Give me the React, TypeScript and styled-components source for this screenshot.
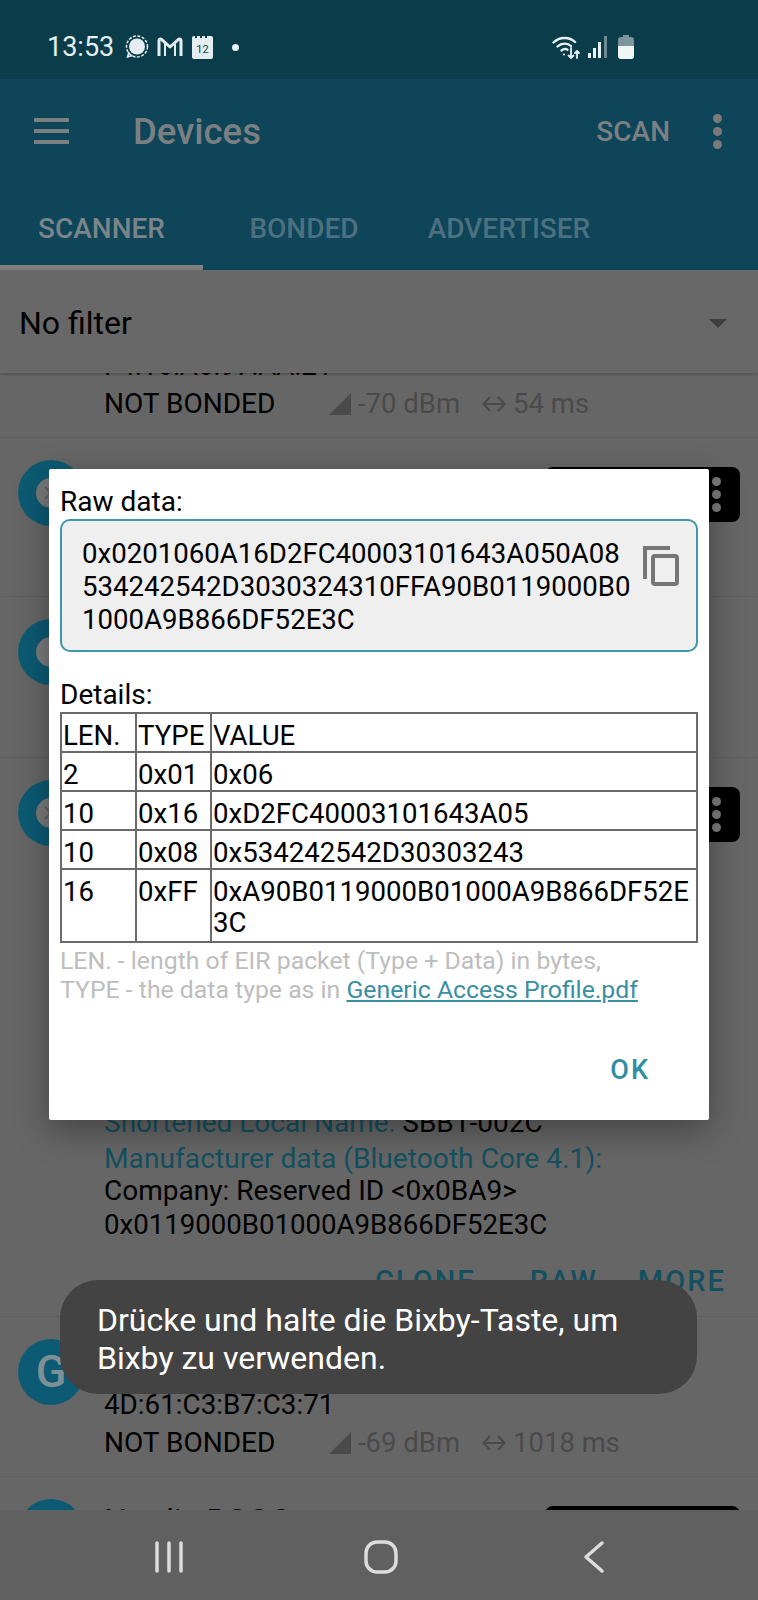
import React from 'react';
import styled, { createGlobalStyle } from 'styled-components';

const GlobalStyle = createGlobalStyle`
  html, body { margin: 0; padding: 0; background: #666; }
  * { box-sizing: border-box; }
  body { font-family: Roboto, "Liberation Sans", sans-serif; }
`;

const Screen = styled.div`
  position: relative;
  width: 758px;
  height: 1600px;
  display: flex;
  flex-direction: column;
  overflow: hidden;
  background: #666;
`;

const StatusBar = styled.div`
  height: 79px;
  flex: none;
  display: flex;
  align-items: center;
  padding: 15px 0 0 47px;
  background: #0b3c49;
  color: #e2f0f2;
`;

const Time = styled.span`
  font-size: 27px;
  line-height: 32px;
  width: 78px;
`;

const CalendarIcon = styled.span`
  position: relative;
  width: 21px;
  height: 23px;
  margin-left: 9px;
  padding-top: 6px;
  border-radius: 2px;
  background: #e4eef0;
  color: #17414d;
  font-size: 11px;
  line-height: 15px;
  text-align: center;

  &::before {
    content: '';
    position: absolute;
    top: 0;
    left: 3px;
    right: 3px;
    height: 2px;
    background: repeating-linear-gradient(90deg, #0b3c49 0 2px, transparent 2px 5px);
  }
`;

const StatusDot = styled.span`
  width: 7px;
  height: 7px;
  margin-left: 19px;
  border-radius: 50%;
  background: #e8f2f4;
`;

const StatusRight = styled.div`
  margin-left: 313px;
  display: flex;
  align-items: center;
  gap: 7px;
`;

const AppBar = styled.div`
  height: 191px;
  flex: none;
  background: #0e4559;
`;

const TopRow = styled.div`
  height: 104px;
  display: flex;
  align-items: center;
  padding-right: 36px;
  color: #7a7f82;
`;

const MenuIcon = styled.svg`
  width: 35px;
  height: 26px;
  margin-left: 34px;
`;

const Title = styled.span`
  margin-left: 64px;
  font-size: 36.5px;
  font-weight: 500;
  flex: 1;
`;

const ScanAction = styled.span`
  font-size: 28px;
  font-weight: 500;
  margin-right: 43px;
`;

const Dots = styled.div`
  display: flex;
  flex-direction: column;
  gap: 4px;
  width: 9px;
`;

const Dot = styled.span`
  width: 9px;
  height: 9px;
  border-radius: 50%;
  background: #7a7a7a;
`;

const Tabs = styled.div`
  height: 87px;
  display: flex;
`;

const Tab = styled.div<{ $active?: boolean; $width: number }>`
  width: ${(p) => p.$width}px;
  height: 87px;
  padding-top: 28px;
  text-align: center;
  font-size: 28px;
  line-height: 36px;
  font-weight: 500;
  color: ${(p) => (p.$active ? '#7a8489' : '#4c7080')};
  border-bottom: 5px solid ${(p) => (p.$active ? '#7f7f7f' : 'transparent')};
`;

const FilterRow = styled.div`
  position: relative;
  z-index: 1;
  height: 103px;
  flex: none;
  display: flex;
  align-items: center;
  justify-content: space-between;
  padding: 3px 31px 0 19px;
  background: #686868;
  box-shadow: 0 1px 3px rgba(0, 0, 0, 0.25);
  font-size: 32px;
  color: #000;
`;

const Caret = styled.span`
  width: 0;
  height: 0;
  border-left: 9px solid transparent;
  border-right: 9px solid transparent;
  border-top: 9px solid #3f3f3f;
`;

const DeviceList = styled.div`
  flex: 1;
  min-height: 0;
  overflow: hidden;
`;

const Device = styled.div<{ $height: number; $offset?: number }>`
  height: ${(p) => p.$height}px;
  margin-top: ${(p) => p.$offset ?? 0}px;
  flex: none;
  display: flex;
  align-items: flex-start;
  padding: 22px 18px 0;
  border-bottom: 1px solid #5e5e5e;
`;

const Avatar = styled.div`
  width: 66px;
  height: 66px;
  flex: none;
  display: flex;
  align-items: center;
  justify-content: center;
  border-radius: 50%;
  background: #0c5a73;
  color: #7f8f96;
  font-size: 45px;
  font-weight: 500;
  line-height: 66px;
`;

const AvatarDisc = styled.div`
  width: 30px;
  height: 30px;
  display: flex;
  align-items: center;
  justify-content: center;
  border-radius: 50%;
  background: #7a7a7a;
`;

const DeviceBody = styled.div<{ $top?: number }>`
  flex: 1;
  min-width: 0;
  margin-left: 20px;
  padding-top: ${(p) => p.$top ?? 0}px;
`;

const DeviceName = styled.div`
  height: 47px;
  padding-top: 3px;
  font-size: 32px;
  line-height: 36px;
  color: #000;
`;

const Line = styled.div`
  height: 37px;
  font-size: 27.8px;
  line-height: 37px;
  color: #000;
  white-space: nowrap;
`;

const StatsLine = styled(Line)`
  display: flex;
  align-items: center;
  padding-top: 2px;
`;

const BondState = styled.span`
  width: 225px;
  font-size: 28px;
`;

const Stat = styled.span`
  display: flex;
  align-items: center;
  gap: 7px;
  margin-right: 22px;
  font-size: 27.5px;
  color: #4a4a4a;
`;

const ConnectButton = styled.div`
  width: 195px;
  height: 55px;
  flex: none;
  display: flex;
  align-items: center;
  justify-content: flex-end;
  padding-right: 19px;
  margin-top: 7px;
  border-radius: 8px;
  background: #000;
`;

const AdField = styled.div<{ $size: number; $nudge?: number }>`
  height: 34px;
  font-size: ${(p) => p.$size}px;
  line-height: ${(p) => 34 + (p.$nudge ?? 0)}px;
  color: #000;
  white-space: nowrap;
`;

const AdKey = styled.span`
  color: #14505f;
`;

const ActionRow = styled.div`
  display: flex;
  gap: 40px;
  margin: 21px 0 0 271px;
`;

const ActionLabel = styled.span`
  font-size: 29px;
  line-height: 36px;
  font-weight: 500;
  letter-spacing: 2px;
  color: #14505f;

  &:first-child {
    margin-right: 14px;
  }
`;

const NavBar = styled.div`
  position: relative;
  z-index: 1;
  height: 90px;
  flex: none;
  display: flex;
  align-items: center;
  background: #606060;
`;

const NavIcon = styled.svg<{ $left: number }>`
  margin-left: ${(p) => p.$left}px;
  margin-top: 32px;
  margin-bottom: 28px;
  flex: none;
`;

const Dialog = styled.div`
  position: absolute;
  z-index: 2;
  left: 49px;
  top: 469px;
  width: 660px;
  height: 651px;
  padding: 16px 11px 0;
  background: #fff;
  border-radius: 2px;
  box-shadow: 0 10px 34px rgba(0, 0, 0, 0.35);
  color: #000;
`;

const Label = styled.div`
  font-size: 28px;
  line-height: 34px;
`;

const RawBox = styled.div`
  height: 133px;
  padding: 16px 12px 0 20px;
  display: flex;
  justify-content: space-between;
  border: 2px solid #3f97aa;
  border-radius: 10px;
  background: #efefef;
`;

const RawText = styled.div`
  font-size: 27.6px;
  line-height: 33px;
  white-space: nowrap;
`;

const CopyIcon = styled.svg`
  margin: 9px 5px 0 0;
  flex: none;
`;

const DetailsLabel = styled(Label)`
  margin-top: 26px;
`;

const DetailsTable = styled.table`
  width: 638px;
  border-collapse: collapse;
  table-layout: fixed;
  font-size: 27.6px;

  tr:last-child td {
    height: 73px;
  }
`;

const Cell = styled.td`
  padding: 6px 0 0 1px;
  height: 39px;
  line-height: 31px;
  vertical-align: top;
  border: 2px solid #6a6a6a;
  word-break: break-all;
`;

const Note = styled.div`
  margin-top: 3px;
  font-size: 24.8px;
  line-height: 29px;
  color: #bdbdbd;
  white-space: nowrap;
`;

const DocLink = styled.span`
  color: #3a8ea2;
  text-decoration: underline;
`;

const DialogActions = styled.div`
  display: flex;
  justify-content: flex-end;
  margin: 48px 48px 0 0;
`;

const OkButton = styled.span`
  font-size: 27px;
  line-height: 36px;
  font-weight: 500;
  letter-spacing: 2px;
  color: #2f8ea4;
`;

const Toast = styled.div`
  position: absolute;
  z-index: 3;
  left: 60px;
  top: 1280px;
  width: 637px;
  height: 114px;
  padding: 21px 20px 0 37px;
  border-radius: 38px;
  background: #434343;
  color: #fff;
  font-size: 32px;
  line-height: 38px;
`;

const MoreDots = () => (
  <Dots>
    <Dot />
    <Dot />
    <Dot />
  </Dots>
);

const BtDisc = ({ mark }: { mark?: boolean }) => (
  <Avatar>
    <AvatarDisc>
      {mark && (
        <svg width="20" height="20" viewBox="0 0 20 20" fill="none" stroke="#5c6468" strokeWidth="2">
          <path d="M4 4l12 12M16 4L4 16" />
        </svg>
      )}
    </AvatarDisc>
  </Avatar>
);

const Stats = ({ rssi, interval }: { rssi: string; interval: string }) => (
  <StatsLine>
    <BondState>NOT BONDED</BondState>
    <Stat>
      <svg width="22" height="22" viewBox="0 0 22 22">
        <path d="M22 0v22H0z" fill="#4a4a4a" />
      </svg>
      {rssi}
    </Stat>
    <Stat>
      <svg width="24" height="18" viewBox="0 0 24 18" fill="none" stroke="#4a4a4a" strokeWidth="2">
        <path d="M8 2L1.500 9 8 16M16 2l6.500 7L16 16M2 9h20" />
      </svg>
      {interval}
    </Stat>
  </StatsLine>
);

const rows = [
  ['2', '0x01', '0x06'],
  ['10', '0x16', '0xD2FC40003101643A05'],
  ['10', '0x08', '0x534242542D30303243'],
  ['16', '0xFF', '0xA90B0119000B01000A9B866DF52E3C'],
];

export default function App() {
  return (
    <Screen>
      <GlobalStyle />
      <StatusBar>
        <Time>13:53</Time>
        <svg width="24" height="24" viewBox="0 0 24 24" fill="none">
          <circle cx="12" cy="11.500" r="8" fill="#e4eef0" />
          <circle cx="12" cy="11.500" r="10.500" stroke="#e4eef0" strokeWidth="1.500" strokeDasharray="3 1.500" />
          <path d="M4 17l-1.500 5 5-1.500" stroke="#e4eef0" strokeWidth="1.500" />
        </svg>
        <svg width="26" height="22" viewBox="0 0 26 22" fill="none" stroke="#e4eef0" strokeWidth="3" style={{ marginLeft: 8 }}>
          <path d="M2 20V4.500c0-1.500 1.500-2 2.500-1.200L13 11l8.500-7.700c1-.8 2.500-.3 2.500 1.200V20" strokeLinejoin="round" />
          <path d="M8 8v12M18 8v12" strokeWidth="2" />
        </svg>
        <CalendarIcon>12</CalendarIcon>
        <StatusDot />
        <StatusRight>
          <svg width="29" height="26" viewBox="0 0 29 26" fill="none" stroke="#e8f2f4" strokeWidth="2.400" strokeLinecap="round">
            <path d="M1.500 8.500C7.500 2.500 17.500 2.500 23 8" />
            <path d="M5.500 12.500c4-3.800 10-3.800 13.500-.5" />
            <path d="M9.500 16.500c2-1.800 4.500-1.800 6-.8" />
            <circle cx="12" cy="20.500" r="1" fill="#e8f2f4" stroke="none" />
            <path d="M19 14v10M16.500 21.500l2.500 2.500 2.500-2.500M25 24v-7M23 19l2-2 2 2" strokeWidth="1.800" />
          </svg>
          <svg width="20" height="24" viewBox="0 0 20 24">
            <rect x="0" y="18" width="3" height="5" fill="#e8f2f4" />
            <rect x="5" y="13" width="3" height="10" fill="#e8f2f4" />
            <rect x="10" y="7" width="3" height="16" fill="#e8f2f4" />
            <rect x="16" y="1" width="3" height="22" fill="#6f8a92" />
          </svg>
          <svg width="16" height="24" viewBox="0 0 16 24" style={{ marginLeft: 3 }}>
            <path d="M5 0h6v2h2a3 3 0 0 1 3 3v16a3 3 0 0 1-3 3H3a3 3 0 0 1-3-3V5a3 3 0 0 1 3-3h2z" fill="#7b959c" />
            <path d="M0 11h16v10a3 3 0 0 1-3 3H3a3 3 0 0 1-3-3z" fill="#f0f5f6" />
          </svg>
        </StatusRight>
      </StatusBar>

      <AppBar>
        <TopRow>
          <MenuIcon viewBox="0 0 35 26" fill="#7a7f82">
            <rect y="0" width="35" height="4" />
            <rect y="11" width="35" height="4" />
            <rect y="22" width="35" height="4" />
          </MenuIcon>
          <Title>Devices</Title>
          <ScanAction>SCAN</ScanAction>
          <MoreDots />
        </TopRow>
        <Tabs>
          <Tab $active $width={203}>SCANNER</Tab>
          <Tab $width={202}>BONDED</Tab>
          <Tab $width={208}>ADVERTISER</Tab>
        </Tabs>
      </AppBar>

      <FilterRow>
        No filter
        <Caret />
      </FilterRow>

      <DeviceList>
        <Device $height={160} $offset={-95}>
          <BtDisc />
          <DeviceBody>
            <DeviceName />
            <Line>F4:16:A6:97:AA:21</Line>
            <Stats rssi="-70 dBm" interval="54 ms" />
          </DeviceBody>
        </Device>
        <Device $height={159}>
          <BtDisc mark />
          <DeviceBody />
          <ConnectButton>
            <MoreDots />
          </ConnectButton>
        </Device>
        <Device $height={161}>
          <BtDisc />
          <DeviceBody />
        </Device>
        <Device $height={559}>
          <BtDisc mark />
          <DeviceBody $top={326}>
            <AdField $size={28}>
              <AdKey>Shortened Local Name: </AdKey>SBB1-002C
            </AdField>
            <AdField $size={28.2} $nudge={4}>
              <AdKey>Manufacturer data (Bluetooth Core 4.1):</AdKey>
            </AdField>
            <AdField $size={28}>Company: Reserved ID &lt;0x0BA9&gt;</AdField>
            <AdField $size={27.6}>0x0119000B01000A9B866DF52E3C</AdField>
            <ActionRow>
              <ActionLabel>CLONE</ActionLabel>
              <ActionLabel>RAW</ActionLabel>
              <ActionLabel>MORE</ActionLabel>
            </ActionRow>
          </DeviceBody>
          <ConnectButton>
            <MoreDots />
          </ConnectButton>
        </Device>
        <Device $height={160}>
          <Avatar>G</Avatar>
          <DeviceBody>
            <DeviceName />
            <Line>4D:61:C3:B7:C3:71</Line>
            <Stats rssi="-69 dBm" interval="1018 ms" />
          </DeviceBody>
        </Device>
        <Device $height={160}>
          <BtDisc />
          <DeviceBody>
            <DeviceName>Nordic BOOO</DeviceName>
          </DeviceBody>
          <ConnectButton />
        </Device>
      </DeviceList>

      <NavBar>
        <NavIcon $left={154} width="30" height="34" viewBox="0 0 30 34" fill="none" stroke="#dcdcdc" strokeWidth="3.500" strokeLinecap="round">
          <path d="M3 3v28M15 3v28M27 3v28" />
        </NavIcon>
        <NavIcon $left={179} width="36" height="36" viewBox="0 0 36 36" fill="none" stroke="#dcdcdc" strokeWidth="3.500">
          <rect x="3" y="3" width="30" height="30" rx="11" />
        </NavIcon>
        <NavIcon $left={183} width="24" height="34" viewBox="0 0 24 34" fill="none" stroke="#dcdcdc" strokeWidth="3.500" strokeLinecap="round" strokeLinejoin="round">
          <path d="M20 3L4 17l16 14" />
        </NavIcon>
      </NavBar>

      <Dialog>
        <Label>Raw data:</Label>
        <RawBox>
          <RawText>
            0x0201060A16D2FC40003101643A050A08
            <br />
            534242542D3030324310FFA90B0119000B0
            <br />
            1000A9B866DF52E3C
          </RawText>
          <CopyIcon width="36" height="40" viewBox="0 0 36 40" fill="none" stroke="#757575" strokeWidth="4">
            <path d="M2 33V2h25" />
            <rect x="10" y="10" width="24" height="28" rx="2" />
          </CopyIcon>
        </RawBox>
        <DetailsLabel>Details:</DetailsLabel>
        <DetailsTable>
          <colgroup>
            <col width="75" />
            <col width="75" />
            <col />
          </colgroup>
          <tbody>
            <tr>
              <Cell>LEN.</Cell>
              <Cell>TYPE</Cell>
              <Cell>VALUE</Cell>
            </tr>
            {rows.map(([len, type, value]) => (
              <tr key={type}>
                <Cell>{len}</Cell>
                <Cell>{type}</Cell>
                <Cell>{value}</Cell>
              </tr>
            ))}
          </tbody>
        </DetailsTable>
        <Note>
          LEN. - length of EIR packet (Type + Data) in bytes,
          <br />
          TYPE - the data type as in <DocLink>Generic Access Profile.pdf</DocLink>
        </Note>
        <DialogActions>
          <OkButton>OK</OkButton>
        </DialogActions>
      </Dialog>

      <Toast>Drücke und halte die Bixby-Taste, um Bixby zu verwenden.</Toast>
    </Screen>
  );
}
